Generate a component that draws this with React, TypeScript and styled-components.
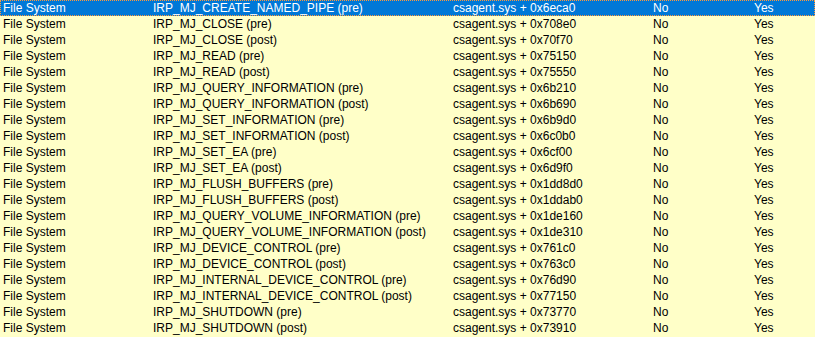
import styled, { createGlobalStyle } from "styled-components"

const GlobalStyle = createGlobalStyle`
    html, body {
        margin: 0;
        padding: 0;
        background: #FFFFC8;
    }
`

const List = styled.div`
    width: 815px;
    height: 337px;
    overflow: hidden;
    background: #FFFFC8;
    font-family: "Segoe UI", "Liberation Sans", Arial, sans-serif;
    font-size: 12px;
    color: #000;
`

const Row = styled.div<{ $selected?: boolean }>`
    display: grid;
    grid-template-columns: 150px 300px 200px 101px 1fr;
    height: 16px;
    line-height: 16px;
    box-sizing: border-box;
    background: ${p => (p.$selected ? "#0078D7" : "transparent")};
    color: ${p => (p.$selected ? "#fff" : "#000")};
    outline: ${p => (p.$selected ? "1px dotted #FF9A3C" : "none")};
    outline-offset: -1px;
`

const Cell = styled.div`
    padding-left: 3px;
    white-space: nowrap;
    overflow: hidden;
`

const rows = [
    ["IRP_MJ_CREATE_NAMED_PIPE (pre)", "0x6eca0"],
    ["IRP_MJ_CLOSE (pre)", "0x708e0"],
    ["IRP_MJ_CLOSE (post)", "0x70f70"],
    ["IRP_MJ_READ (pre)", "0x75150"],
    ["IRP_MJ_READ (post)", "0x75550"],
    ["IRP_MJ_QUERY_INFORMATION (pre)", "0x6b210"],
    ["IRP_MJ_QUERY_INFORMATION (post)", "0x6b690"],
    ["IRP_MJ_SET_INFORMATION (pre)", "0x6b9d0"],
    ["IRP_MJ_SET_INFORMATION (post)", "0x6c0b0"],
    ["IRP_MJ_SET_EA (pre)", "0x6cf00"],
    ["IRP_MJ_SET_EA (post)", "0x6d9f0"],
    ["IRP_MJ_FLUSH_BUFFERS (pre)", "0x1dd8d0"],
    ["IRP_MJ_FLUSH_BUFFERS (post)", "0x1ddab0"],
    ["IRP_MJ_QUERY_VOLUME_INFORMATION (pre)", "0x1de160"],
    ["IRP_MJ_QUERY_VOLUME_INFORMATION (post)", "0x1de310"],
    ["IRP_MJ_DEVICE_CONTROL (pre)", "0x761c0"],
    ["IRP_MJ_DEVICE_CONTROL (post)", "0x763c0"],
    ["IRP_MJ_INTERNAL_DEVICE_CONTROL (pre)", "0x76d90"],
    ["IRP_MJ_INTERNAL_DEVICE_CONTROL (post)", "0x77150"],
    ["IRP_MJ_SHUTDOWN (pre)", "0x73770"],
    ["IRP_MJ_SHUTDOWN (post)", "0x73910"],
]

export default function App() {
    return (
        <>
            <GlobalStyle />
            <List>
                {rows.map(([name, offset], index) => (
                    <Row key={index} $selected={index === 0}>
                        <Cell>File System</Cell>
                        <Cell>{name}</Cell>
                        <Cell>csagent.sys + {offset}</Cell>
                        <Cell>No</Cell>
                        <Cell>Yes</Cell>
                    </Row>
                ))}
            </List>
        </>
    )
}
